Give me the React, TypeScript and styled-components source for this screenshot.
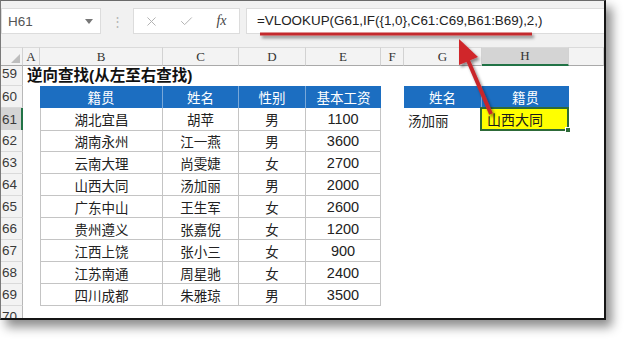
import styled, { createGlobalStyle } from "styled-components";
import { X, Check } from "lucide-react";

const GlobalStyle = createGlobalStyle`
  body {
    margin: 0;
    background: #fff;
    font-family: "Liberation Sans", "Noto Sans CJK SC", sans-serif;
  }
  * { box-sizing: border-box; }
`;

const COLS = "22px 17px 123px 76px 67px 75px 23px 78px 87px 1fr";

const Page = styled.div`
  width: 627px;
  height: 342px;
  position: relative;
  overflow: hidden;
  background: #fff;
`;

const Window = styled.div`
  width: 606px;
  height: 320px;
  display: flex;
  flex-direction: column;
  background: #fff;
  border-top: 1px solid #6a6a6a;
  border-left: 1px solid #7a7a7a;
  border-right: 2px solid #151515;
  border-bottom: 2px solid #151515;
  box-shadow: 6px 7px 10px rgba(0, 0, 0, 0.45);
  overflow: hidden;
`;

const FormulaBar = styled.div`
  height: 46px;
  flex: none;
  display: flex;
  align-items: flex-start;
  padding-top: 7px;
  background: #f1f1f1;
`;

const NameBox = styled.div`
  width: 100px;
  height: 26px;
  background: #fff;
  border: 1px solid #dcdcdc;
  display: flex;
  align-items: center;
  justify-content: space-between;
  padding: 0 7px 0 6px;
  font-size: 13.5px;
  color: #555;
`;

const Caret = styled.span`
  width: 0;
  height: 0;
  border-left: 4px solid transparent;
  border-right: 4px solid transparent;
  border-top: 5px solid #777;
`;

const Dots = styled.div`
  width: 32px;
  height: 26px;
  display: flex;
  align-items: center;
  justify-content: center;
  color: #b5b5b5;
  font-size: 13px;
`;

const FuncBox = styled.div`
  width: 107px;
  height: 26px;
  background: #fff;
  border: 1px solid #dcdcdc;
  display: grid;
  grid-template-columns: repeat(3, 1fr);
  align-items: center;
  justify-items: center;
`;

const Fx = styled.span`
  font-family: "Liberation Serif", serif;
  font-style: italic;
  font-size: 14px;
  color: #444;
`;

const FormulaInput = styled.div`
  flex: 1;
  height: 26px;
  margin-left: 6px;
  background: #fff;
  border: 1px solid #dcdcdc;
  border-right: none;
  padding-left: 10px;
  font-size: 13.4px;
  line-height: 24px;
  color: #222;
  white-space: nowrap;
`;

const Sheet = styled.div`
  flex: 1;
  overflow: hidden;
  display: flex;
  flex-direction: column;
`;

const Row = styled.div<{ $h: number }>`
  display: grid;
  grid-template-columns: ${COLS};
  height: ${(p) => p.$h}px;
  flex: none;
`;

const ColHead = styled.div<{ $active?: boolean }>`
  background: ${(p) => (p.$active ? "#d4d4d4" : "#f3f3f3")};
  border-top: 1px solid #dadada;
  border-right: 1px solid #d2d2d2;
  border-bottom: ${(p) => (p.$active ? "2px solid #217346" : "1px solid #a9a9a9")};
  font-family: "Liberation Serif", "DejaVu Serif", serif;
  font-size: 13px;
  color: #333;
  display: flex;
  align-items: center;
  justify-content: center;
  position: relative;
`;

const Corner = styled(ColHead)`
  &::after {
    content: "";
    position: absolute;
    right: 2px;
    bottom: 2px;
    border-left: 9px solid transparent;
    border-bottom: 9px solid #bdbdbd;
  }
`;

const RowNum = styled.div<{ $active?: boolean }>`
  background: ${(p) => (p.$active ? "#d4d4d4" : "#f3f3f3")};
  border-right: ${(p) => (p.$active ? "2px solid #217346" : "1px solid #b8b8b8")};
  border-bottom: 1px solid #dadada;
  font-size: 13.5px;
  color: #3a3a3a;
  display: flex;
  align-items: center;
  padding-left: 1px;
`;

const Title = styled.div`
  grid-column: 2 / -1;
  display: flex;
  align-items: center;
  padding-left: 4px;
  font-weight: 700;
  font-size: 15.5px;
  color: #111;
`;

type Kind = "blank" | "head" | "data" | "plain" | "pick";

const Cell = styled.div<{ $kind?: Kind; $first?: boolean; $last?: boolean; $num?: boolean }>`
  position: relative;
  display: flex;
  align-items: center;
  white-space: nowrap;
  font-size: ${(p) => (p.$num ? "14.5px" : "13.5px")};
  color: #222;
  justify-content: ${(p) => (p.$kind === "head" || p.$kind === "data" ? "center" : "flex-start")};
  ${(p) =>
    p.$kind === "head" &&
    `
    background: #1c6ec1;
    color: #fff;
    border-right: ${p.$last ? "none" : "1px solid #79a8d9"};
  `}
  ${(p) =>
    p.$kind === "data" &&
    `
    border-right: 1px solid #c4c4c4;
    border-bottom: 1px solid #c4c4c4;
    border-left: ${p.$first ? "1px solid #c4c4c4" : "none"};
  `}
  ${(p) => p.$kind === "plain" && `padding-left: 4px;`}
  ${(p) =>
    p.$kind === "pick" &&
    `
    background: #ffff00;
    border: 2px solid #2d6a38;
    margin: -1px 0 0 -2px;
    padding-left: 5px;
    font-size: 14px;
    color: #1a1a1a;
  `}
`;

const Handle = styled.span`
  position: absolute;
  right: -4px;
  bottom: -4px;
  width: 6px;
  height: 6px;
  background: #2d6a38;
  border: 1px solid #fff;
`;

const Overlay = styled.svg`
  position: absolute;
  left: 0;
  top: 0;
  pointer-events: none;
`;

const cols = ["A", "B", "C", "D", "E", "F", "G", "H", ""];

const data = [
  ["湖北宜昌", "胡苹", "男", "1100"],
  ["湖南永州", "江一燕", "男", "3600"],
  ["云南大理", "尚雯婕", "女", "2700"],
  ["山西大同", "汤加丽", "男", "2000"],
  ["广东中山", "王生军", "女", "2600"],
  ["贵州遵义", "张嘉倪", "女", "1200"],
  ["江西上饶", "张小三", "女", "900"],
  ["江苏南通", "周星驰", "女", "2400"],
  ["四川成都", "朱雅琼", "男", "3500"],
];

export default function App() {
  return (
    <Page>
      <GlobalStyle />
      <Window>
        <FormulaBar>
          <NameBox>
            H61
            <Caret />
          </NameBox>
          <Dots>⋮</Dots>
          <FuncBox>
            <X size={15} color="#b3b3b3" strokeWidth={1.6} />
            <Check size={15} color="#b3b3b3" strokeWidth={1.6} />
            <Fx>fx</Fx>
          </FuncBox>
          <FormulaInput>=VLOOKUP(G61,IF({"{"}1,0{"}"},C61:C69,B61:B69),2,)</FormulaInput>
        </FormulaBar>

        <Sheet>
          <Row $h={15}>
            <Corner />
            {cols.map((c, i) => (
              <ColHead key={i} $active={c === "H"}>
                {c}
              </ColHead>
            ))}
          </Row>

          <Row $h={24}>
            <RowNum>59</RowNum>
            <Title>逆向查找(从左至右查找)</Title>
          </Row>

          <Row $h={22}>
            <RowNum>60</RowNum>
            <Cell />
            <Cell $kind="head">籍贯</Cell>
            <Cell $kind="head">姓名</Cell>
            <Cell $kind="head">性别</Cell>
            <Cell $kind="head" $last>
              基本工资
            </Cell>
            <Cell />
            <Cell $kind="head">姓名</Cell>
            <Cell $kind="head" $last>
              籍贯
            </Cell>
            <Cell />
          </Row>

          {data.map((r, i) => (
            <Row $h={22} key={i}>
              <RowNum $active={i === 0}>{61 + i}</RowNum>
              <Cell />
              {r.map((v, j) => (
                <Cell $kind="data" $first={j === 0} $num={j === 3} key={j}>
                  {v}
                </Cell>
              ))}
              <Cell />
              {i === 0 ? (
                <>
                  <Cell $kind="plain">汤加丽</Cell>
                  <Cell $kind="pick">
                    山西大同
                    <Handle />
                  </Cell>
                </>
              ) : (
                <>
                  <Cell />
                  <Cell />
                </>
              )}
              <Cell />
            </Row>
          ))}

          <Row $h={22}>
            <RowNum>70</RowNum>
          </Row>
        </Sheet>
      </Window>

      <Overlay width={627} height={342}>
        <defs>
          <filter id="sh" x="-20%" y="-50%" width="140%" height="200%">
            <feDropShadow dx="2" dy="2.5" stdDeviation="1.4" floodColor="#000" floodOpacity="0.45" />
          </filter>
        </defs>
        <g filter="url(#sh)">
          <line x1={260} y1={34} x2={532} y2={34} stroke="#c42a2f" strokeWidth={3} />
          <line x1={491} y1={114} x2={467} y2={58} stroke="#c8262c" strokeWidth={4} />
          <polygon points="459,39 478,57 459,65" fill="#d0262c" />
        </g>
      </Overlay>
    </Page>
  );
}
